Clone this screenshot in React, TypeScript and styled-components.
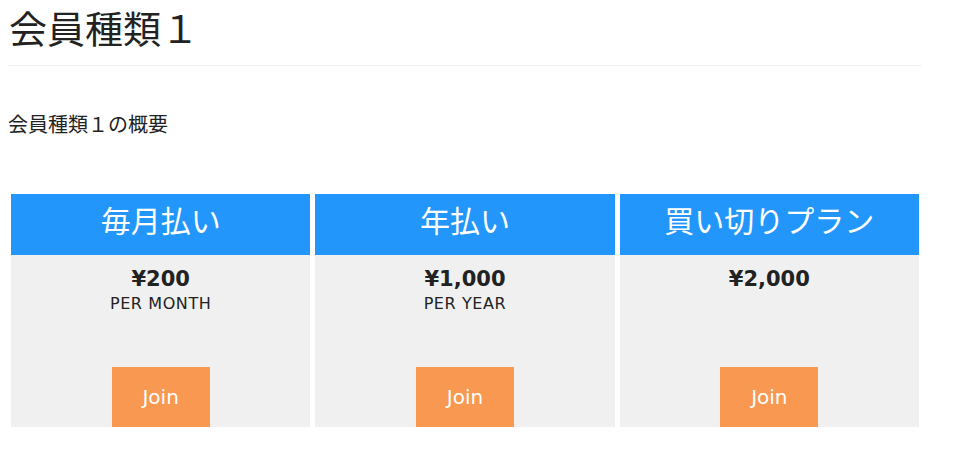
import * as React from 'react'
import styled, { createGlobalStyle } from 'styled-components'

const GlobalStyle = createGlobalStyle`
  body {
    margin: 8px;
    font-family: "DejaVu Sans", "Noto Sans CJK JP", sans-serif;
    color: #222;
    background: #fff;
  }
`

const plans = [
  { id: 1, name: '毎月払い', price: '¥200', unit: 'PER MONTH' },
  { id: 2, name: '年払い', price: '¥1,000', unit: 'PER YEAR' },
  { id: 3, name: '買い切りプラン', price: '¥2,000', unit: '' },
]

const Page = styled.div`
  width: 913px;
`

const Title = styled.h1`
  margin: 0;
  padding: 0 0 13px 1px;
  font-size: 38px;
  font-weight: 400;
  line-height: 44px;
  color: #222;
  border-bottom: 1px solid #eee;
`

const Lead = styled.p`
  margin: 47px 0 0 0;
  font-size: 20px;
  line-height: 24px;
`

const Cards = styled.div`
  display: flex;
  gap: 5px;
  width: 908px;
  margin: 57px 0 0 3px;
`

const Card = styled.div`
  flex: 1;
  background: #f0f0f0;
  display: flex;
  flex-direction: column;
  align-items: center;
`

const CardHeader = styled.div`
  align-self: stretch;
  height: 61px;
  background: #2396fc;
  color: #fff;
  font-size: 30px;
  line-height: 56px;
  text-align: center;
`

const Price = styled.div`
  margin-top: 10px;
  font-size: 21px;
  font-weight: 700;
  line-height: 28px;
  color: #222;
`

const Unit = styled.div`
  height: 22px;
  font-size: 16px;
  line-height: 22px;
  letter-spacing: 0.6px;
  color: #222;
`

const JoinButton = styled.button`
  margin-top: 52px;
  width: 98px;
  height: 60px;
  border: none;
  background: #f89851;
  color: #fff;
  font-family: inherit;
  font-size: 20px;
  cursor: pointer;
`

const App: React.FC = () => {
  return (
    <Page>
      <GlobalStyle />
      <Title>会員種類１</Title>
      <Lead>会員種類１の概要</Lead>
      <Cards>
        {plans.map((plan) => (
          <Card key={plan.id}>
            <CardHeader>{plan.name}</CardHeader>
            <Price>{plan.price}</Price>
            <Unit>{plan.unit}</Unit>
            <JoinButton>Join</JoinButton>
          </Card>
        ))}
      </Cards>
    </Page>
  )
}

export default App
